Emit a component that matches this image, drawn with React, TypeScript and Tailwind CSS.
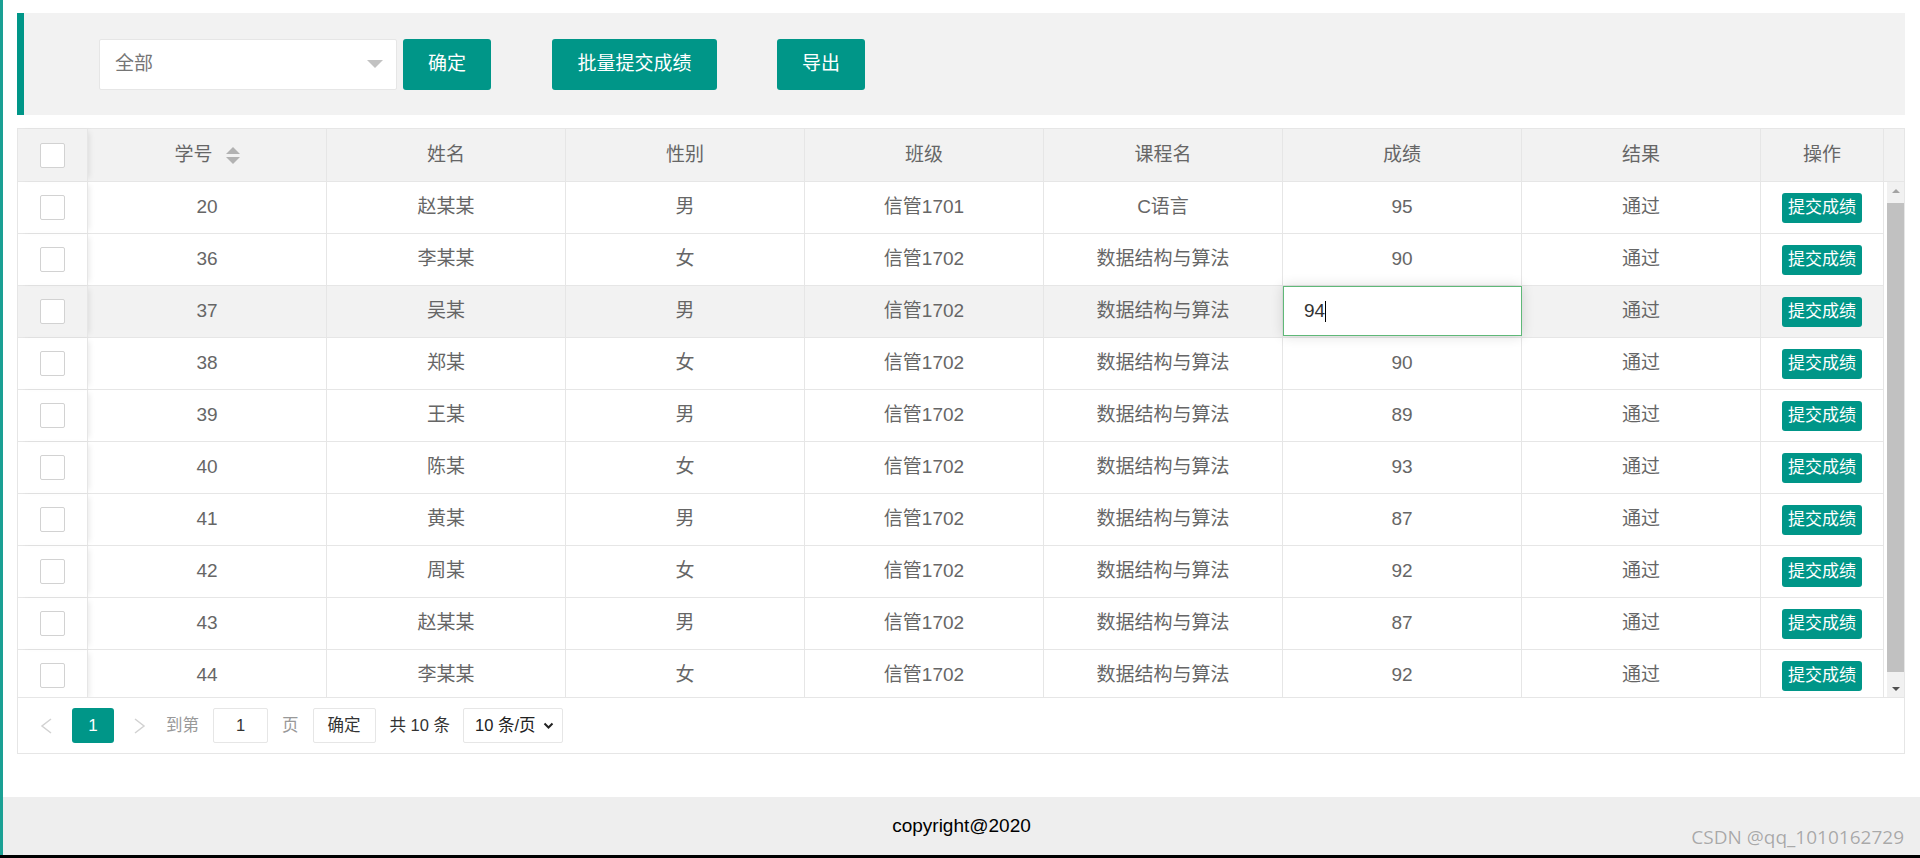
import React from 'react';

type Row = {
  id: number;
  name: string;
  sex: string;
  cls: string;
  course: string;
  score: string;
};

const rows: Row[] = [
  { id: 20, name: '赵某某', sex: '男', cls: '信管1701', course: 'C语言', score: '95' },
  { id: 36, name: '李某某', sex: '女', cls: '信管1702', course: '数据结构与算法', score: '90' },
  { id: 37, name: '吴某', sex: '男', cls: '信管1702', course: '数据结构与算法', score: '94' },
  { id: 38, name: '郑某', sex: '女', cls: '信管1702', course: '数据结构与算法', score: '90' },
  { id: 39, name: '王某', sex: '男', cls: '信管1702', course: '数据结构与算法', score: '89' },
  { id: 40, name: '陈某', sex: '女', cls: '信管1702', course: '数据结构与算法', score: '93' },
  { id: 41, name: '黄某', sex: '男', cls: '信管1702', course: '数据结构与算法', score: '87' },
  { id: 42, name: '周某', sex: '女', cls: '信管1702', course: '数据结构与算法', score: '92' },
  { id: 43, name: '赵某某', sex: '男', cls: '信管1702', course: '数据结构与算法', score: '87' },
  { id: 44, name: '李某某', sex: '女', cls: '信管1702', course: '数据结构与算法', score: '92' },
];

// row being edited (hovered + inline score input)
const EDIT_ID = 37;

function Checkbox() {
  return <span className="block h-[25px] w-[25px] rounded-[2px] border border-[#d2d2d2] bg-white" />;
}

function Cell({ children }: { children?: React.ReactNode }) {
  return (
    <div className="flex items-center justify-center border-r border-[#e6e6e6]">{children}</div>
  );
}

function SortIcon() {
  return (
    <span className="ml-[13px] flex flex-col items-center gap-[3px]">
      <span className="h-0 w-0 border-x-[7px] border-b-[7px] border-x-transparent border-b-[#b2b2b2]" />
      <span className="h-0 w-0 border-x-[7px] border-t-[7px] border-x-transparent border-t-[#b2b2b2]" />
    </span>
  );
}

function Chevron({ dir }: { dir: 'left' | 'right' }) {
  return (
    <svg width="12" height="16" viewBox="0 0 12 16" fill="none">
      <polyline
        points={dir === 'left' ? '11,1 2,8 11,15' : '1,1 10,8 1,15'}
        stroke="#d2d2d2"
        strokeWidth="1.5"
      />
    </svg>
  );
}

export default function App() {
  return (
    <div className="flex h-[858px] flex-col bg-white font-['Liberation_Sans','Noto_Sans_CJK_SC',sans-serif]">
      <div className="flex min-h-0 flex-1">
        <div className="w-[3px] bg-[#1aa094]" />
        <div className="flex flex-1 flex-col">
          <main className="flex-1 pl-[14px] pr-[15px] pt-[13px]">
            {/* Toolbar */}
            <div className="flex h-[102px] items-center border-l-[7px] border-[#009688] bg-[#f2f2f2] pl-[75px] text-[19px]">
              <div className="flex h-[51px] w-[298px] items-center justify-between rounded-[2px] border border-[#e6e6e6] bg-white pl-[15px] pr-[13px] text-[#757575]">
                <span>全部</span>
                <span className="h-0 w-0 border-x-[8px] border-t-[8px] border-x-transparent border-t-[#c2c2c2]" />
              </div>
              <button className="ml-[6px] h-[51px] w-[88px] rounded-[3px] bg-[#009688] text-white">确定</button>
              <button className="ml-[61px] h-[51px] w-[165px] rounded-[3px] bg-[#009688] text-white">批量提交成绩</button>
              <button className="ml-[60px] h-[51px] w-[88px] rounded-[3px] bg-[#009688] text-white">导出</button>
            </div>

            {/* Table */}
            <div className="mt-[13px] border border-[#e6e6e6] text-[19px] text-[#666]">
              <div className="grid h-[53px] grid-cols-[70px_repeat(7,239px)_123px_1fr] border-b border-[#e6e6e6] bg-[#f2f2f2]">
                <div className="relative z-10 flex items-center justify-center border-r border-[#e6e6e6] shadow-[4px_0_6px_-3px_rgba(0,0,0,0.1)]">
                  <Checkbox />
                </div>
                <Cell>
                  <span>学号</span>
                  <SortIcon />
                </Cell>
                <Cell>姓名</Cell>
                <Cell>性别</Cell>
                <Cell>班级</Cell>
                <Cell>课程名</Cell>
                <Cell>成绩</Cell>
                <Cell>结果</Cell>
                <Cell>操作</Cell>
                <div />
              </div>

              <div className="flex h-[515px]">
                <div className="w-[1866px] overflow-hidden">
                  {rows.map((r) => {
                    const editing = r.id === EDIT_ID;
                    return (
                      <div
                        key={r.id}
                        className={`grid h-[52px] grid-cols-[70px_repeat(7,239px)_123px] border-b border-[#e6e6e6] ${editing ? 'bg-[#f2f2f2]' : 'bg-white'}`}
                      >
                        <div className="relative z-10 flex items-center justify-center border-r border-[#e6e6e6] shadow-[4px_0_6px_-3px_rgba(0,0,0,0.1)]">
                          <Checkbox />
                        </div>
                        <Cell>{r.id}</Cell>
                        <Cell>{r.name}</Cell>
                        <Cell>{r.sex}</Cell>
                        <Cell>{r.cls}</Cell>
                        <Cell>{r.course}</Cell>
                        <div className="relative flex items-center justify-center border-r border-[#e6e6e6]">
                          {editing ? (
                            <div className="absolute left-0 top-0 z-20 flex h-[50px] w-[239px] items-center border border-[#5fb878] bg-white pl-[20px] text-[#333] shadow-[0_0_12px_rgba(0,0,0,0.14)]">
                              {r.score}
                              <span className="inline-block h-[21px] w-px bg-black" />
                            </div>
                          ) : (
                            r.score
                          )}
                        </div>
                        <Cell>通过</Cell>
                        <Cell>
                          <button className="h-[30px] w-[80px] rounded-[3px] bg-[#009688] text-[17px] text-white">
                            提交成绩
                          </button>
                        </Cell>
                      </div>
                    );
                  })}
                </div>
                {/* scrollbar */}
                <div className="flex flex-1 justify-end">
                  <div className="flex w-[17px] flex-col bg-[#f1f1f1]">
                    <div className="flex h-[17px] items-center justify-center">
                      <span className="h-0 w-0 border-x-[4px] border-b-[4px] border-x-transparent border-b-[#a3a3a3]" />
                    </div>
                    <div className="flex flex-1 flex-col pb-[8px] pt-[4px]">
                      <div className="flex-1 bg-[#c1c1c1]" />
                    </div>
                    <div className="flex h-[17px] items-center justify-center">
                      <span className="h-0 w-0 border-x-[4px] border-t-[4px] border-x-transparent border-t-[#505050]" />
                    </div>
                  </div>
                </div>
              </div>

              {/* Pagination */}
              <div className="flex h-[56px] items-center border-t border-[#e6e6e6] pl-[7px] text-[16.5px]">
                <span className="flex h-[35px] w-[42px] items-center justify-center">
                  <Chevron dir="left" />
                </span>
                <span className="ml-[5px] flex h-[35px] w-[42px] items-center justify-center rounded-[3px] bg-[#009688] text-[17px] text-white">
                  1
                </span>
                <span className="ml-[5px] flex h-[35px] w-[42px] items-center justify-center">
                  <Chevron dir="right" />
                </span>
                <span className="ml-[5px] text-[#999]">到第</span>
                <span className="ml-[14px] flex h-[35px] w-[55px] items-center justify-center rounded-[2px] border border-[#e6e6e6] text-[#333]">
                  1
                </span>
                <span className="ml-[14px] text-[#999]">页</span>
                <span className="ml-[14px] flex h-[35px] w-[63px] items-center justify-center rounded-[2px] border border-[#e6e6e6] text-[#333]">
                  确定
                </span>
                <span className="ml-[14px] text-[#333]">共 10 条</span>
                <span className="ml-[13px] flex h-[35px] w-[100px] items-center rounded-[2px] border border-[#e6e6e6] pl-[11px] pr-[8px] text-[#222]">
                  10 条/页
                  <svg className="ml-auto" width="11" height="8" viewBox="0 0 11 8" fill="none">
                    <polyline points="1.5,1.5 5.5,5.5 9.5,1.5" stroke="#222" strokeWidth="2" />
                  </svg>
                </span>
              </div>
            </div>
          </main>

          <footer className="relative flex h-[58px] items-center justify-center bg-[#eeeeee] text-[19px] text-black">
            copyright@2020
            <span className="absolute right-[16px] top-[27px] font-['Open_Sans',sans-serif] text-[19px] leading-[26px] text-[#a9a9a9] [text-shadow:0_0_1px_#ffffff]">
              CSDN @qq_1010162729
            </span>
          </footer>
        </div>
      </div>
      <div className="h-[3px] bg-black" />
    </div>
  );
}
